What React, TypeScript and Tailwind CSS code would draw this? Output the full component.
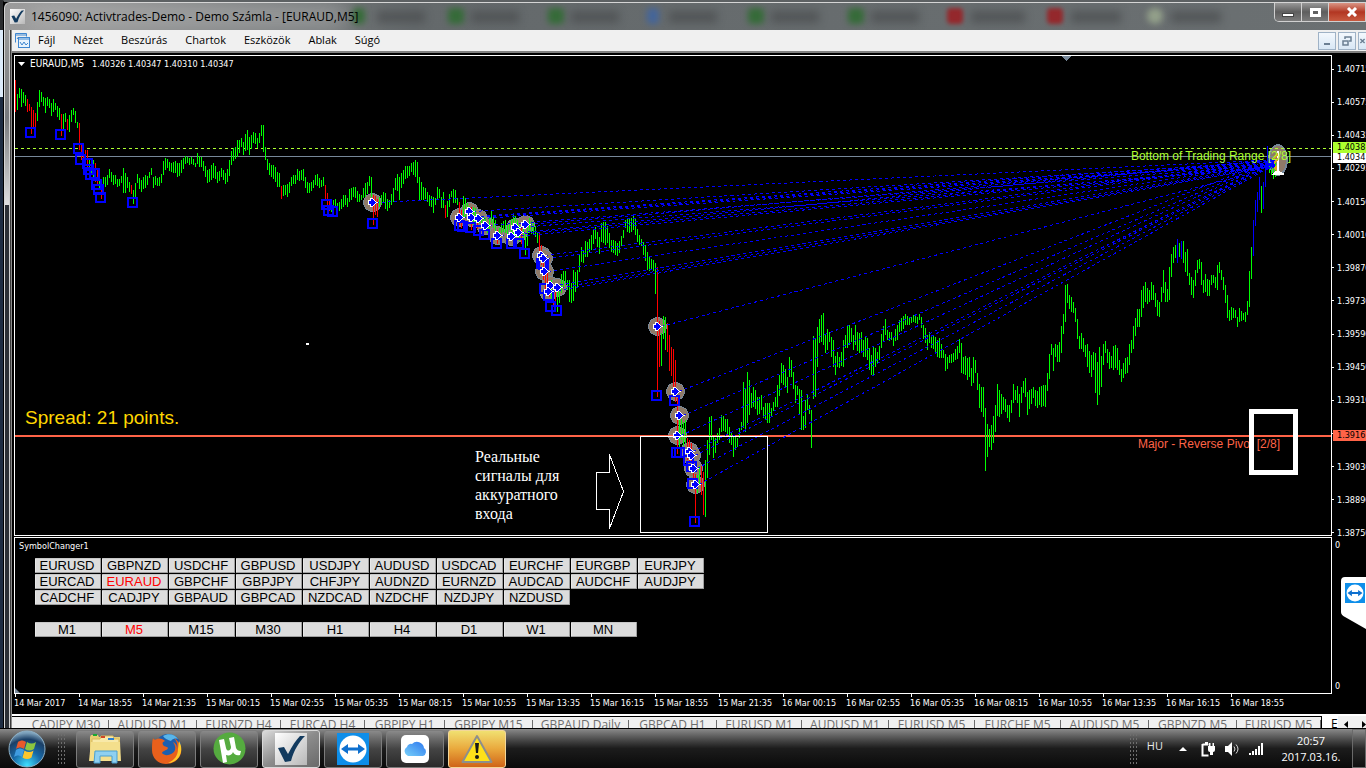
import React from 'react'

type Bar = [number, number, number, string]

// x, high, low and an optional colour key (r = red, b = blue, lime otherwise)
const BAR_DATA = `15 80 112 r;17 94 110;19 88 98;21 89 107;23 92 103;25 95 106;27 99 112 r;29 104 111 r;31 107 134 r;33 110 129 r;35 113 127 r;37 102 121;39 90 107;41 92 102;43 97 106;45 98 113;47 97 106;49 99 108;51 103 116;53 99 112;55 103 110;57 106 117;59 108 120;61 114 136 r;63 114 129;65 113 122;67 119 130 r;69 115 132;71 110 122;73 108 115;75 111 123;77 122 128;79 123 150 r;81 143 160 r;83 148 163 r;85 150 166 r;87 150 168 r;89 160 175;91 163 173;93 160 177;95 163 182 r;97 168 185 r;99 175 190;101 183 199 r;103 177 188;105 177 187;109 169 178;113 175 185;117 179 187;121 176 183;123 168 193;125 173 193;127 177 188;131 185 194 r;133 190 204;135 183 197;137 174 183;141 180 192;145 175 188;149 172 178;151 168 175;153 177 188;157 178 186;161 174 183;163 161 175;167 159 168;171 163 172;177 163 177;181 160 173;187 157 163;191 157 164;195 163 167;197 153 164;201 157 167;205 166 177;207 170 183;213 163 178;217 172 183;221 168 177;225 173 184;229 160 176;231 151 165;235 147 159;237 140 157;241 138 147;243 142 155;247 130 150;249 137 155;253 132 143;257 138 148;261 125 136;263 125 152;265 147 160;267 159 170;271 165 177;275 167 182;279 173 187;281 186 199 r;285 185 195;287 184 197;291 177 186;295 175 184;297 169 180;301 170 180;303 169 181;305 177 188;309 183 193;313 180 188;317 174 186;321 180 187;323 177 186;325 185 199 r;327 193 205 r;329 199 211 r;331 202 212;335 199 207;339 202 211;343 195 207;347 198 207;349 189 202;353 187 197;357 191 202;361 195 200;365 183 197;369 176 186;371 177 197;373 195 225 r;375 196 215 r;377 199 217 r;379 197 207;383 192 203;385 193 209;389 200 208;393 188 202;395 178 190;397 174 191;399 177 200;401 173 188;407 166 178;411 163 172;413 162 175;417 162 183;419 177 200;423 187 200;427 192 202;431 196 207;433 197 213;435 198 205;437 187 200;439 189 198;441 197 208;443 192 208;445 205 218 r;447 201 217;449 194 207;451 191 197;453 189 203;455 190 203;457 198 205;459 202 225 r;461 210 228 r;463 196 217;465 198 218;467 203 213;471 207 230 r;475 208 222;477 216 229 r;479 215 223;483 217 225;487 223 233;491 211 223;495 220 235;497 230 244 r;501 223 233;505 220 233;509 223 230;513 215 243;517 220 235;521 227 244 r;525 233 255;529 218 233;533 223 235;537 233 243;539 233 253 r;541 245 265 r;543 257 280 r;545 263 293 r;547 273 293 r;549 285 297 r;551 280 300;553 287 306 r;555 288 306 r;557 288 312;559 285 303;561 274 293;563 271 287;565 271 283;567 280 290;569 280 302;571 283 303;573 270 301;575 272 292;577 270 288;579 255 272;581 247 262;583 251 263;585 241 257;589 239 253;591 235 250;595 227 239;597 232 247;599 237 254;601 223 242;605 222 245;607 226 243;609 233 248;611 240 252;615 241 255;619 241 253;623 230 238;625 220 228;627 218 232;631 218 232;633 216 230;635 219 235;637 229 242;641 239 246;643 242 255;647 252 270;651 259 270;653 260 271;655 263 294;657 267 397 r;659 321 367 r;661 333 366;663 316 339;665 317 350;667 323 352 r;669 335 371 r;671 347 376 r;673 349 387 r;675 360 402 r;677 398 454 r;679 420 447;681 419 440;683 422 446;685 420 443;687 438 460 r;689 440 463 r;691 443 463 r;693 460 483 r;695 474 523 r;697 475 493;699 466 484;701 466 495 r;703 472 515 r;705 460 517;707 440 478;709 417 455;711 416 440;713 437 458;715 438 453;717 433 443;719 428 440;721 415 432;725 419 432;727 419 435;729 427 443;731 433 445;733 437 457;737 438 447;739 428 438;741 422 430;743 382 428;745 388 432;747 372 423;749 380 415;751 393 408;753 387 407;757 397 415;761 395 410;763 407 418;767 403 423;769 403 423;771 408 417;775 397 407;777 385 407;781 363 383;783 365 385;787 377 393;789 357 377;791 360 377;795 385 403;797 386 395;801 390 430;803 416 430;805 400 428;807 395 410;809 405 414;811 410 448;813 336 399;815 339 397;817 327 367;819 319 343;821 315 342;823 313 345;825 335 353;827 329 350;829 332 342;831 337 357;833 340 367;835 356 375;837 352 367;839 357 368;841 352 366;843 340 367;845 335 348;847 325 348;849 325 345;851 328 342;853 335 350;855 325 345;857 332 351;861 332 352;863 340 357;867 338 360;869 348 370;871 355 375;873 347 375;877 352 363;879 346 360;881 334 348;885 319 335;887 330 340;891 332 340;893 337 346;897 325 340;899 320 332;903 316 329;907 316 325;911 317 323;913 315 322;915 316 323;919 314 320;921 317 328;923 325 339;927 335 350;929 332 343;931 336 348;935 337 352;939 338 358;943 350 358;945 354 371;949 355 363;953 353 362;955 349 360;959 339 353;961 343 373;963 357 374;967 358 380;969 357 377;971 368 386;973 357 383;975 360 373;977 373 390;979 384 408;981 387 412;983 387 417;985 408 471;987 424 457;989 429 447;991 425 450;993 416 443;995 405 432;997 384 416;999 390 417;1003 397 410;1007 405 418;1009 405 422;1011 400 413;1013 384 403;1015 390 400;1017 386 403;1019 394 417;1021 387 403;1023 381 393;1025 378 397;1027 392 415;1029 390 409;1033 387 398;1035 390 406;1039 387 405;1041 386 407;1045 385 407;1047 373 391;1049 354 379;1051 344 355;1053 348 371;1055 344 357;1059 342 362;1061 326 353;1063 314 334;1065 285 322;1067 284 303;1069 295 309;1071 297 312;1073 302 313;1075 308 322;1077 319 339;1079 336 349;1081 333 349;1085 345 357;1087 344 367;1091 355 377;1093 352 370;1095 353 393;1097 362 405;1099 347 395;1101 356 387;1103 344 365;1105 341 353;1109 352 369;1111 356 368;1113 346 370;1117 348 370;1119 360 375;1121 369 382;1123 363 378;1127 357 373;1129 344 365;1131 340 353;1133 326 349;1135 318 336;1137 309 327;1139 309 327;1141 290 317;1143 286 308;1145 282 302;1149 290 302;1151 282 300;1153 285 300;1155 293 307;1157 300 316;1159 302 317;1161 287 302;1163 270 293;1165 282 302;1167 289 302;1169 267 300;1171 254 277;1173 247 263;1175 245 258;1177 239 263 b;1179 243 257;1181 241 259 b;1183 241 263;1185 252 272;1187 249 276;1189 273 285;1191 277 295;1193 280 298;1195 270 286;1197 260 273;1199 259 269;1201 262 285;1203 280 293;1205 274 292;1209 280 296;1211 275 285;1213 275 283;1215 277 288;1217 265 290;1219 262 273;1221 270 280;1223 277 290;1225 285 303;1227 295 318;1229 310 321;1231 307 320;1235 310 318;1237 317 327;1239 308 322;1243 313 320;1245 312 322;1247 301 315;1249 271 307;1251 247 279;1253 220 256 b;1255 200 226 b;1257 192 212 b;1259 177 200 b;1261 186 213;1263 182 209 b;1265 163 187 b;1267 146 167 b;1269 160 173;1271 163 175;1273 165 179;1275 160 177`

const COLORS: Record<string, string> = { g: '#00ff00', r: '#ff0000', b: '#0000ff' }

function buildBars(): Bar[] {
  const known: Bar[] = BAR_DATA.split(';').map((row) => {
    const p = row.split(' ')
    return [+p[0], +p[1], +p[2], p[3] || 'g']
  })
  const out: Bar[] = []
  known.forEach((bar, i) => {
    out.push(bar)
    const next = known[i + 1]
    if (!next) return
    for (let x = bar[0] + 2; x < next[0]; x += 2) {
      const t = (x - bar[0]) / (next[0] - bar[0])
      const wobble = ((x * 7) % 5) - 2
      out.push([
        x,
        Math.round(bar[1] + (next[1] - bar[1]) * t + wobble),
        Math.round(bar[2] + (next[2] - bar[2]) * t + wobble),
        'g',
      ])
    }
  })
  return out
}

const BARS = buildBars()

const SQUARES = [
  [30, 132], [60, 134], [78, 148], [80, 159], [87, 163], [88, 169], [90, 174], [94, 173], [96, 184], [98, 189],
  [100, 197], [132, 202], [326, 204], [328, 210], [332, 211], [372, 223], [459, 225], [462, 226], [470, 227],
  [478, 230], [484, 234], [496, 243], [511, 243], [518, 243], [524, 253], [541, 263], [543, 264], [544, 288],
  [548, 295], [550, 306], [556, 310], [656, 395], [674, 400], [676, 452], [679, 452], [688, 460], [691, 466],
  [692, 483], [694, 521],
]

const SIGNALS = [
  [372, 202], [459, 217], [469, 211], [471, 217], [478, 218], [485, 225], [497, 235], [511, 236], [515, 227],
  [518, 232], [525, 224], [541, 255], [543, 258], [544, 271], [550, 285], [557, 287], [548, 291], [657, 326],
  [675, 391], [679, 415], [677, 435], [689, 451], [691, 455], [693, 468], [695, 484],
]

const PRICES = [
  '1.40715', '1.40575', '1.40435', '1.40295', '1.40150', '1.40010', '1.39870', '1.39730', '1.39590', '1.39450',
  '1.39310', '', '1.39030', '1.38890', '1.38750',
]

const TIMES = [
  '14 Mar 2017', '14 Mar 18:55', '14 Mar 21:35', '15 Mar 00:15', '15 Mar 02:55', '15 Mar 05:35', '15 Mar 08:15',
  '15 Mar 10:55', '15 Mar 13:35', '15 Mar 16:15', '15 Mar 18:55', '15 Mar 21:35', '16 Mar 00:15', '16 Mar 02:55',
  '16 Mar 05:35', '16 Mar 08:15', '16 Mar 10:55', '16 Mar 13:35', '16 Mar 16:15', '16 Mar 18:55',
]

const SYMBOLS = [
  ['EURUSD', 'GBPNZD', 'USDCHF', 'GBPUSD', 'USDJPY', 'AUDUSD', 'USDCAD', 'EURCHF', 'EURGBP', 'EURJPY'],
  ['EURCAD', 'EURAUD', 'GBPCHF', 'GBPJPY', 'CHFJPY', 'AUDNZD', 'EURNZD', 'AUDCAD', 'AUDCHF', 'AUDJPY'],
  ['CADCHF', 'CADJPY', 'GBPAUD', 'GBPCAD', 'NZDCAD', 'NZDCHF', 'NZDJPY', 'NZDUSD'],
]
const FRAMES = ['M1', 'M5', 'M15', 'M30', 'H1', 'H4', 'D1', 'W1', 'MN']

const TABS: [string, string][] = [
  ['CADJPY M30', 'w-[97px] pl-[12px]'], ['AUDUSD M1', 'w-[88px]'], ['EURNZD H4', 'w-[84px]'], ['EURCAD H4', 'w-[84px]'],
  ['GBPJPY H1', 'w-[80px]'], ['GBPJPY M15', 'w-[88px]'], ['GBPAUD Daily', 'w-[96px]'], ['GBPCAD H1', 'w-[88px]'],
  ['EURUSD M1', 'w-[85px]'], ['AUDUSD M1', 'w-[87px]'], ['EURUSD M5', 'w-[86px]'], ['EURCHF M5', 'w-[86px]'],
  ['AUDUSD M5', 'w-[88px]'], ['GBPNZD M5', 'w-[88px]'], ['EURUSD M5', 'w-[84px]'],
]

const UI = "font-['Open_Sans','Noto_Sans',sans-serif]"
const SMALL = "font-['DejaVu_Sans_Condensed','DejaVu_Sans',sans-serif]"
const ARIAL = "font-['Liberation_Sans',Arial,sans-serif]"

function Plot() {
  return (
    <svg className="block h-full w-full" viewBox="15 56 1316 479" preserveAspectRatio="none" shapeRendering="crispEdges">
      <g>
        {SIGNALS.map(([x, y], i) => (
          <circle key={i} cx={x + 0.5} cy={y + 0.5} r="9" fill="#8f7a68" stroke="#778899" />
        ))}
        <ellipse cx="1278" cy="160" rx="9" ry="15" fill="#8f7a68" stroke="#778899" strokeWidth="2" />
      </g>
      <path d="M15 148.5H1331" stroke="#adff2f" strokeDasharray="3 3" />
      <path d="M15 156.5H1331" stroke="#778899" />
      <path d="M15 436H1331" stroke="#ff6347" strokeWidth="2" />
      <g>
        {BARS.map(([x, top, bottom, c]) => (
          <rect key={x} x={x} y={top} width="1" height={bottom - top} fill={COLORS[c]} />
        ))}
      </g>
      <g stroke="#0000ff" fill="none">
        {SIGNALS.map(([x, y], i) => (
          <path key={i} d={`M${x + 4} ${y + 0.5}L1272 ${160 + (i % 9)}`} strokeDasharray="3 3" />
        ))}
      </g>
      <g fill="none" stroke="#0000ff" strokeWidth="2">
        {SQUARES.map(([x, y], i) => (
          <rect key={i} x={x - 4} y={y - 4} width="9" height="9" />
        ))}
      </g>
      <g>
        {SIGNALS.map(([x, y], i) => (
          <path
            key={i}
            transform={`translate(${x} ${y})`}
            d="M-3-1H-1V-3H0L4 .5L0 4H-1V2H-3Z"
            fill="#0000ff"
            stroke="#ffffff"
            strokeWidth="2"
            paintOrder="stroke"
          />
        ))}
      </g>
      <path d="M1268 158l7 2v9l-6-3z" fill="#0000ff" />
      <path d="M1278 151v20l6 3h-11l4-4v-16z" fill="#ffffff" stroke="#ffffff" />
      <path d="M1274 156l4-4v3l-4 4zM1274 161l4-4v3l-4 4zM1273 168l4-4v7z" fill="#daa520" />
      <g fill="none" stroke="#ffffff">
        <rect x="640.5" y="436.5" width="127" height="96" />
        <path d="M596.5 472.5h13v-18l14 37-14 37v-19h-13z" />
        <path d="M306 344h3" strokeWidth="2" />
      </g>
      <path d="M1062 56h9l-4.500 5z" fill="#778899" />
    </svg>
  )
}

function Grip() {
  return (
    <span className="grid grid-cols-3 gap-x-[2px] gap-y-[2px]">
      {Array.from({ length: 24 }, (_, i) => (
        <span key={i} className="h-[2px] w-[1px] bg-[#6e6e6e]" />
      ))}
    </span>
  )
}

function Check({ size }: { size: number }) {
  return (
    <svg width={size} height={size} viewBox="0 0 32 32" aria-hidden="true">
      <defs>
        <linearGradient id="tile" x1="0" y1="0" x2="1" y2="1">
          <stop offset="0" stopColor="#ffffff" />
          <stop offset="1" stopColor="#b8b8b8" />
        </linearGradient>
      </defs>
      <rect width="32" height="32" fill="url(#tile)" />
      <path d="M3 15l6-1 4 7C17 13 21 7 25 3l5 0C24 9 19 17 16 28l-6 1z" fill="#123a5e" />
    </svg>
  )
}

function Viewer({ size }: { size: number }) {
  return (
    <svg width={size} height={size} viewBox="0 0 32 32" aria-hidden="true">
      <rect width="32" height="32" fill="#0e8ee9" />
      <circle cx="16" cy="16" r="13.500" fill="#fff" />
      <path d="M4 16l7-5v3.500h10V11l7 5-7 5v-3.500H11V21z" fill="#0e70cf" />
    </svg>
  )
}

function TaskIcon({ name }: { name: string }) {
  if (name === 'Explorer')
    return (
      <svg width="34" height="32" viewBox="0 0 34 32">
        <path d="M2 4l1-2h7l1 2h21v24H2z" fill="#e9cf73" />
        <path d="M4 6h8l1-3h12l1 3h5v20H4z" fill="#f8e9a8" stroke="#d9b95c" />
        <path d="M5 1h4v2H5z" fill="#19a832" />
        <path d="M13 3h4v2h-4z" fill="#d24726" />
        <path d="M20 5h6v2h-6z" fill="#2d7fd0" />
        <path d="M3 9h29l1 19H1z" fill="#f4df8c" />
        <path d="M7 18h22v12h-5v-7H12v7H6z" fill="#8fd0f0" stroke="#4aa0d0" />
      </svg>
    )
  if (name === 'Firefox')
    return (
      <svg width="32" height="32" viewBox="0 0 32 32">
        <circle cx="17" cy="14" r="13" fill="#1d5fae" />
        <path d="M12 3c5-3 12-2 15 3-3-1-6 0-7 2-3-1-6-2-8-5z" fill="#58b5ea" />
        <path d="M2 5c1 2 2 2 4 1 3-1 6 0 8 2-3 1-3 3-1 5 2 1 4 1 4 2-1 3-5 2-6 5 3 4 11 2 13-3 1-4-1-6-2-8 4 2 4 5 4 7 1-4 0-8-3-11 6 4 8 10 7 15-2 7-8 11-15 11C7 31 1 25 1 17 1 12 1 9 2 5z" fill="#e8601c" />
        <path d="M28 8c3 5 3 11 0 16-3 4-7 6-11 6 7-3 10-8 10-14z" fill="#ffc928" />
      </svg>
    )
  if (name === 'uTorrent')
    return (
      <svg width="33" height="33" viewBox="0 0 33 33">
        <circle cx="16.500" cy="16.500" r="16" fill="#55ab3f" />
        <path d="M6 8l5-1 2 9c1 4 5 3 5-1l-2-9 5-1 2 11c1 2 2 3 5 3l-1 4c-4 1-6-1-7-3-1 3-4 4-7 3l1 7-4 1z" fill="#fff" />
      </svg>
    )
  if (name === 'iCloud')
    return (
      <svg width="28" height="28" viewBox="0 0 28 28">
        <defs>
          <linearGradient id="cloud" x1="0" y1="1" x2="1" y2="0">
            <stop offset="0" stopColor="#77d0fa" />
            <stop offset="1" stopColor="#2d77ee" />
          </linearGradient>
        </defs>
        <rect width="28" height="28" rx="5" fill="#fff" />
        <path d="M7 21a5 5 0 0 1-1-9 4 4 0 0 1 5-3 7 7 0 0 1 12 4 4.500 4.500 0 0 1-1 8z" fill="url(#cloud)" />
      </svg>
    )
  if (name === 'Alert')
    return (
      <svg width="32" height="30" viewBox="0 0 32 30">
        <path d="M16 2L30.500 28h-29z" fill="#ffe11a" stroke="#8d8f8c" strokeWidth="2" strokeLinejoin="round" />
        <path d="M14 9h4l-1 10h-2z" fill="#181818" />
        <circle cx="16" cy="23" r="2" fill="#181818" />
      </svg>
    )
  if (name === 'TeamViewer') return <Viewer size={32} />
  return <Check size={32} />
}

function StartOrb() {
  return (
    <svg width="40" height="38" viewBox="0 0 40 38" aria-hidden="true">
      <defs>
        <radialGradient id="orb" cx=".5" cy=".95" r=".9">
          <stop offset="0" stopColor="#3fe0ff" />
          <stop offset=".45" stopColor="#1769a8" />
          <stop offset=".8" stopColor="#1b3f66" />
          <stop offset="1" stopColor="#7fa3bd" />
        </radialGradient>
      </defs>
      <circle cx="20" cy="19" r="18" fill="url(#orb)" stroke="#8fb2c8" />
      <path d="M11 12c3-2 5-2 8 0l-2 7c-3-2-5-2-8 0z" fill="#e8592b" />
      <path d="M20 12c3 2 6 2 9 0l-2 7c-3 2-6 2-9 0z" fill="#8cc63f" />
      <path d="M9 20c3-2 5-2 8 0l-2 7c-3-2-5-2-8 0z" fill="#3f9be0" />
      <path d="M17.500 20.500c3 2 6 2 9 0l-2 7c-3 2-6 2-9 0z" fill="#fbc62d" />
    </svg>
  )
}

const TASKS = ['Explorer', 'Firefox', 'uTorrent', 'MetaTrader', 'TeamViewer', 'iCloud', 'Alert']

function taskClass(name: string) {
  if (name === 'MetaTrader') return 'border-[#d8d8d8] bg-linear-to-br from-[#dcdcdc] via-[#8c8c8c] to-[#6a6a6a]'
  if (name === 'Alert') return 'border-[#f3d79a] bg-linear-to-b from-[#f0e070] via-[#e9a83c] to-[#cf6418]'
  return 'border-[#7c7c7c] bg-linear-to-b from-[#8a8a8a] via-[#444444] to-[#2a2a2a]'
}

function SymbolButton({ label }: { label: string }) {
  const active = label === 'EURAUD' || label === 'M5'
  return (
    <button
      className={`h-[15px] w-[66px] rounded-[1px] border border-t-[#c8c8c8] border-l-[#e8e8e8] border-r-[#a0a0a0] border-b-[#a0a0a0] bg-[#dcdcdc] pr-[2px] text-[13px] leading-[13px] ${
        active ? 'text-[#ff0000]' : 'text-black'
      }`}
    >
      {label}
    </button>
  )
}

export default function App() {
  return (
    <div className="relative flex h-screen w-full flex-col overflow-hidden bg-black">
      <div className="flex min-h-0 flex-1">
        <div className="flex w-[3px] flex-col">
          <div className="h-[30px] bg-[#2b2d2f]" />
          <div className="h-[67px] bg-[#dcebfa]" />
          <div className="flex-1 bg-[#1d2c42]" />
        </div>
        <div className="flex min-w-0 flex-1 flex-col border-l border-t-2 border-l-black border-t-[#5d6163] bg-black">
          <header className="relative flex h-[28px] shrink-0 items-center overflow-hidden rounded-tl-md border-t border-l border-[#d5d5d5] bg-linear-to-r from-[#9c9c9c] via-[#64696b] via-30% to-[#6b7072]">
            <div className="absolute inset-0" aria-hidden="true">
              <span className="absolute top-1 left-6 h-5 w-[320px] rounded-full bg-[#c4c4c4] opacity-60 blur-md" />
              <span className="absolute top-[5px] left-[348px] h-4 w-3 rounded bg-[#356b38] blur-[3px]" />
              <span className="absolute top-2 left-[372px] h-3 w-[48px] bg-[#4a4d4f] opacity-70 blur-[4px]" />
              <span className="absolute top-[5px] left-[443px] h-4 w-4 rounded bg-[#356b38] blur-[3px]" />
              <span className="absolute top-2 left-[466px] h-3 w-[48px] bg-[#4a4d4f] opacity-70 blur-[4px]" />
              <span className="absolute top-[5px] left-[543px] h-4 w-4 rounded bg-[#356b38] blur-[3px]" />
              <span className="absolute top-2 left-[566px] h-3 w-[48px] bg-[#4a4d4f] opacity-70 blur-[4px]" />
              <span className="absolute top-[5px] left-[642px] h-4 w-3 rounded bg-[#44659a] blur-[3px]" />
              <span className="absolute top-2 left-[664px] h-3 w-[48px] bg-[#4a4d4f] opacity-70 blur-[4px]" />
              <span className="absolute top-[5px] left-[743px] h-4 w-4 rounded bg-[#356b38] blur-[3px]" />
              <span className="absolute top-2 left-[766px] h-3 w-[48px] bg-[#4a4d4f] opacity-70 blur-[4px]" />
              <span className="absolute top-[5px] left-[843px] h-4 w-4 rounded bg-[#356b38] blur-[3px]" />
              <span className="absolute top-2 left-[866px] h-3 w-[48px] bg-[#4a4d4f] opacity-70 blur-[4px]" />
              <span className="absolute top-[5px] left-[942px] h-4 w-4 rounded bg-[#94282c] blur-[2px]" />
              <span className="absolute top-2 left-[966px] h-3 w-[54px] bg-[#4a4d4f] opacity-70 blur-[4px]" />
              <span className="absolute top-[5px] left-[1042px] h-4 w-4 rounded bg-[#94282c] blur-[2px]" />
              <span className="absolute top-2 left-[1066px] h-3 w-[50px] bg-[#4a4d4f] opacity-70 blur-[4px]" />
              <span className="absolute top-[5px] left-[1142px] h-4 w-4 rounded-full bg-[#93a08a] blur-[3px]" />
              <span className="absolute top-2 left-[1166px] h-3 w-[50px] bg-[#4a4d4f] opacity-70 blur-[4px]" />
            </div>
            <div className={`relative flex items-center gap-[6px] pl-[5px] text-[12px] text-black ${UI}`}>
              <Check size={15} />
              <h1>1456090: Activtrades-Demo - Demo Számla - [EURAUD,M5]</h1>
            </div>
            <div className="relative ml-auto flex h-[19px] self-start overflow-hidden rounded-bl-[5px] border border-t-0 border-[#d0d0d0]">
              <button aria-label="Minimize" className="flex w-[27px] items-end justify-center border-r border-[#d0d0d0] bg-linear-to-b from-[#999999] via-[#5e5e5e] to-[#7b7b7b] pb-[4px]">
                <span className="h-[4px] w-[12px] border border-[#444] bg-white" />
              </button>
              <button aria-label="Maximize" className="flex w-[27px] items-center justify-center border-r border-[#d0d0d0] bg-linear-to-b from-[#999999] via-[#5e5e5e] to-[#7b7b7b]">
                <span className="h-[9px] w-[11px] border-[3px] border-white" />
              </button>
              <button aria-label="Close" className="flex w-[36px] items-center bg-linear-to-b from-[#d89484] via-[#b23622] to-[#c85a40] pl-[17px]">
                <svg width="12" height="10" viewBox="0 0 12 10"><path d="M2 1l8 8M10 1l-8 8" stroke="#fff" strokeWidth="3" /></svg>
              </button>
            </div>
          </header>

          <div className="flex min-h-0 flex-1">
            <div className="flex w-[5px] shrink-0 flex-col border-l border-[#d5d5d5]">
              <div className="h-[175px] bg-linear-to-b from-[#9a9a9a] via-[#77797c] to-[#e0e0e0]" />
              <div className="flex-1 bg-[#2c3036]" />
            </div>
            <div className="w-[3px] shrink-0 border-r border-l border-r-[#8a8a8a] border-l-[#d0d0d0] bg-[#3a3a3a]" />
            <main className="flex min-w-0 flex-1 flex-col">
              <div className={`flex h-[21px] shrink-0 items-center bg-[#f0f0f0] text-[11px] text-black ${UI}`}>
                <svg className="ml-[3px]" width="15" height="15" viewBox="0 0 15 15" fill="none" stroke="#3f86cf" aria-hidden="true">
                  <path d="M.5 9.500V.5h11v3M.5 2h11M2 6l1.500-2L5 6" />
                  <rect x="3.500" y="4.500" width="11" height="10" fill="#e8f3fd" />
                  <path d="M4 6h10M5 9l2 3 2-3 2 3 2-2" />
                </svg>
                <nav className="ml-[8px] flex gap-[18px]">
                  {['Fájl', 'Nézet', 'Beszúrás', 'Chartok', 'Eszközök', 'Ablak', 'Súgó'].map((m) => (
                    <button key={m}>{m}</button>
                  ))}
                </nav>
                <div className="ml-auto flex gap-[2px] overflow-hidden">
                  {['Minimize chart', 'Restore chart', 'Close chart'].map((label, i) => (
                    <button
                      key={label}
                      aria-label={label}
                      className={`flex h-[18px] shrink-0 items-center justify-center border border-[#9fb2c6] bg-linear-to-b from-[#f3f8fd] to-[#d8e7f5] ${i === 2 ? 'w-[8px] border-r-0' : 'w-[18px]'}`}
                    >
                      <svg width="10" height="10" viewBox="0 0 10 10" fill="none" stroke="#6b7f93" strokeWidth="2">
                        {i === 0 && <path d="M2 8h6" />}
                        {i === 1 && <path d="M1 5h5v4H1zM3 3V1h6v4H7" strokeWidth="1.500" />}
                        {i === 2 && <path d="M2 2l6 6M8 2L2 8" />}
                      </svg>
                    </button>
                  ))}
                </div>
              </div>
              <div className="h-[2px] shrink-0 bg-[#808080]" />

              <div className="flex min-h-0 flex-1 flex-col bg-black pt-[2px] pl-[2px] text-white">
                <div className="flex min-h-0 flex-1">
                  <section className="relative min-w-0 flex-1 border border-white">
                    <Plot />
                    <div className={`absolute top-[1px] left-[3px] flex items-center text-[9px] leading-[14px] ${SMALL}`}>
                      <svg width="7" height="4" viewBox="0 0 7 4"><path d="M0 0h7L3.500 4z" fill="#fff" /></svg>
                      <span className="ml-[5px] w-[62px] text-[10px]">EURAUD,M5</span>
                      <span>1.40326 1.40347 1.40310 1.40347</span>
                    </div>
                    <p className={`absolute bottom-[104px] left-[10px] text-[19px] leading-[26px] text-[#ffd700] ${ARIAL}`}>Spread: 21 points.</p>
                    <p className={`absolute right-[40px] bottom-[371px] text-[12px] leading-[16px] text-[#adff2f] ${ARIAL}`}>Bottom of Trading Range [2/8]</p>
                    <p className={`absolute right-[51px] bottom-[83px] text-[12px] leading-[16px] text-[#ff6347] ${ARIAL}`}>Major - Reverse Pivot [2/8]</p>
                    <div className="absolute right-[33px] bottom-[60px] h-[66px] w-[49px] border-[5px] border-white" />
                    <p className="absolute bottom-[12px] left-[460px] w-[110px] font-['Liberation_Serif','Times_New_Roman',serif] text-[16px] leading-[19px]">
                      Реальные<br />сигналы для<br />аккуратного<br />входа
                    </p>
                  </section>
                  <div className={`relative w-[34px] shrink-0 text-[9px] leading-[12px] ${SMALL}`}>
                    <ul className="flex h-full flex-col justify-between pt-[8px]">
                      {PRICES.map((p, i) => (
                        <li key={i} className="flex h-[12px] items-center gap-[3px] last:-mb-[3px]">
                          <span className="h-px w-[2px] shrink-0 bg-white" />
                          {p}
                        </li>
                      ))}
                    </ul>
                    <span className="absolute top-[97px] left-[1px] h-[11px] w-full bg-white pl-[4px] leading-[11px] text-black">1.4034</span>
                    <span className="absolute top-[87px] left-[1px] h-[11px] w-full bg-[#adff2f] pl-[4px] leading-[11px] text-black">1.4038</span>
                    <span className="absolute bottom-[95px] left-[1px] h-[11px] w-full bg-[#ff6347] pl-[4px] leading-[11px] text-black">1.3916</span>
                  </div>
                </div>

                <div className="mt-px flex h-[157px] shrink-0">
                  <section className="relative min-w-0 flex-1 border border-white pl-[4px]">
                    <h2 className={`h-[20px] pt-[2px] text-[9px] leading-[13px] ${SMALL}`}>SymbolChanger1</h2>
                    <div className={`flex flex-col gap-px pl-[16px] ${ARIAL}`}>
                      {SYMBOLS.map((row) => (
                        <div key={row[0]} className="flex gap-px">
                          {row.map((s) => (
                            <SymbolButton key={s} label={s} />
                          ))}
                        </div>
                      ))}
                      <div className="mt-[16px] flex gap-px">
                        {FRAMES.map((f) => (
                          <SymbolButton key={f} label={f} />
                        ))}
                      </div>
                    </div>
                    <svg className="absolute bottom-0 left-0" width="5" height="5" viewBox="0 0 5 5"><path d="M0 0l5 5H0z" fill="#778899" /></svg>
                  </section>
                  <div className={`flex w-[34px] shrink-0 flex-col justify-between pt-[2px] pb-[2px] pl-[3px] text-[9px] leading-[12px] ${SMALL}`}>
                    <span>0</span>
                    <span>0</span>
                  </div>
                </div>

                <div className={`flex h-[20px] shrink-0 overflow-hidden text-[9px] ${SMALL}`}>
                  {TIMES.map((t) => (
                    <span key={t} className="flex w-[64px] shrink-0 flex-col leading-[13px] whitespace-nowrap">
                      <span className="ml-px h-[3px] w-px bg-white" />
                      {t}
                    </span>
                  ))}
                </div>
              </div>

              <div className={`flex h-[14px] shrink-0 overflow-hidden border-t-2 border-white bg-[#f0f0f0] text-[12px] leading-[16px] text-[#6d6d6d] ${UI}`}>
                <div className="flex h-[24px] shrink-0 border-t border-r border-black">
                  {TABS.map(([label, w]) => (
                    <button key={label + w} className={`flex shrink-0 justify-center whitespace-nowrap ${w}`}>
                      <span className="flex-1">{label}</span>
                      <span className="mt-[3px] h-[10px] w-px bg-[#6d6d6d]" />
                    </button>
                  ))}
                </div>
                <button className="w-[16px] overflow-hidden bg-white pl-[9px] text-left text-black">E</button>
                <div className="flex flex-1 justify-between pt-[5px] pl-[6px]">
                  <svg width="4" height="7" viewBox="0 0 4 7"><path d="M4 0v7L0 3.500z" fill="#000" /></svg>
                  <svg width="4" height="7" viewBox="0 0 4 7"><path d="M0 0v7l4-3.500z" fill="#000" /></svg>
                </div>
              </div>
            </main>
          </div>
        </div>
      </div>

      <div className="absolute right-0 bottom-[139px] h-[52px] w-[25px]">
        <svg className="absolute inset-0" width="25" height="52" viewBox="0 0 25 52"><path d="M4 0h21v52L4 40q-4-2-4-5V4q0-4 4-4z" fill="#fff" /></svg>
        <div className="absolute top-[6px] left-[4px]"><Viewer size={20} /></div>
      </div>

      <footer className="flex h-[40px] shrink-0 items-center border-t border-black bg-linear-to-b from-[#8a8a8a] from-0% via-[#1c1c1c] via-50% to-[#0a0a0a]">
        <button aria-label="Start" className="ml-[7px]"><StartOrb /></button>
        <div className="ml-[11px]"><Grip /></div>
        <div className="ml-[11px] flex gap-[4px]">
          {TASKS.map((t) => (
            <button key={t} aria-label={t} className={`flex h-[38px] w-[58px] items-center justify-center rounded-[3px] border ${taskClass(t)}`}>
              <TaskIcon name={t} />
            </button>
          ))}
        </div>
        <div className={`ml-auto flex h-full items-center text-[12px] text-white ${UI}`}>
          <Grip />
          <span className="ml-[10px] pb-[4px] text-[11px] text-[#e8e8e8]">HU</span>
          <button aria-label="Show hidden icons" className="ml-[16px]">
            <svg width="8" height="4" viewBox="0 0 8 4"><path d="M4 0l4 4H0z" fill="#fff" /></svg>
          </button>
          <svg className="ml-[14px]" width="15" height="16" viewBox="0 0 15 16" aria-label="Power">
            <path d="M1.500 3.500h6M1.500 3v11.500h6M4 2h3" fill="none" stroke="#fff" strokeWidth="2" />
            <path d="M7 5h7v4q0 2-2 2v3H9v-3q-2 0-2-2zM8 2h1.500v3H8zM11.500 2H13v3h-1.500z" fill="#fff" />
          </svg>
          <svg className="ml-[9px]" width="15" height="14" viewBox="0 0 15 14" aria-label="Volume">
            <path d="M0 4h3l4-4v14l-4-4H0z" fill="#fff" />
            <path d="M9 4.500q2 2.500 0 5M11 2.500q4 4.500 0 9" fill="none" stroke="#ddd" />
          </svg>
          <svg className="ml-[9px]" width="15" height="12" viewBox="0 0 15 12" aria-label="Network">
            <path d="M0 10h2v2H0zM3 8h2v4H3zM6 6h2v6H6zM9 3h2v9H9zM12 0h2v12h-2z" fill="#fff" />
          </svg>
          <div className="ml-[10px] flex w-[74px] flex-col items-center text-[11px] leading-[16px]">
            <time>20:57</time>
            <time>2017.03.16.</time>
          </div>
          <button aria-label="Show desktop" className="ml-[4px] h-full w-[14px] border border-[#6a6a6a] bg-linear-to-b from-[#8a8a8a] via-[#2a2a2a] to-[#101010]" />
        </div>
      </footer>
    </div>
  )
}
